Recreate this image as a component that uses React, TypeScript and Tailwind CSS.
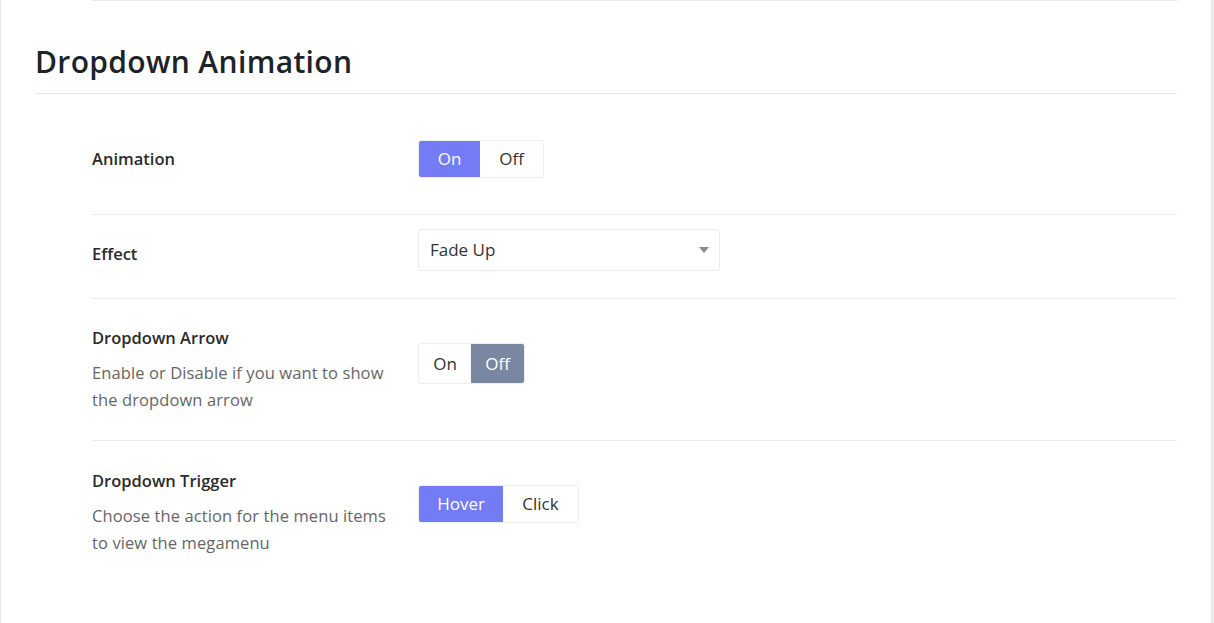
const font = { fontFamily: '"Open Sans", "Noto Sans", Arial, sans-serif' };

function Toggle({
  options,
  active,
  activeClass,
  height,
  widths,
}: {
  options: string[];
  active: number;
  activeClass: string;
  height: string;
  widths: string[];
}) {
  return (
    <div className={`flex ${height} rounded-[3px] border border-[#eeeeee] overflow-hidden`}>
      {options.map((o, i) => (
        <div
          key={o}
          className={`flex items-center justify-center text-[17px] ${widths[i]} ${
            i === active ? activeClass + " text-white" : "bg-white text-[#333]"
          }`}
        >
          {o}
        </div>
      ))}
    </div>
  );
}

function Label({ title, desc }: { title: string; desc?: string[] }) {
  return (
    <div className="w-[326px] shrink-0">
      <div className="text-[16.5px] font-semibold text-[#2b2b2b] leading-[24px]">{title}</div>
      {desc && (
        <div className="mt-[9px] text-[16.5px] text-[#666] leading-[27px] tracking-[0.1px]">
          {desc.map((d) => (
            <div key={d}>{d}</div>
          ))}
        </div>
      )}
    </div>
  );
}

export default function App() {
  return (
    <div className="w-[1214px] h-[623px] bg-white flex" style={font}>
      <div className="w-px bg-[#e6e6e6]" />
      <div className="flex-1 pl-[34px] pr-[34px]">
        <div className="ml-[57px] h-px bg-[#e8e8e8]" />
        <h2 className="mt-[41px] text-[30px] font-semibold text-[#1d2327] leading-[40px] tracking-[0.35px]">
          Dropdown Animation
        </h2>
        <div className="mt-[11px] h-px bg-[#e5e5e5]" />
        <div className="pl-[57px]">
          <div className="flex items-center pt-[46px] pb-[36px] border-b border-[#ebebeb]">
            <Label title="Animation" />
            <Toggle
              options={["On", "Off"]}
              active={0}
              activeClass="bg-[#737bf5]"
              height="h-[38px]"
              widths={["w-[61px]", "w-[63px]"]}
            />
          </div>
          <div className="flex items-start pt-[14px] pb-[27px] border-b border-[#ebebeb]">
            <div className="mt-[13px]">
              <Label title="Effect" />
            </div>
            <div className="w-[302px] h-[42px] rounded-[3px] border border-[#eaeaea] flex items-center justify-between pl-[11px] pr-[10px]">
              <span className="text-[17px] text-[#333]">Fade Up</span>
              <svg width="10" height="6" viewBox="0 0 10 6">
                <path d="M0 0h10L5 6z" fill="#888" />
              </svg>
            </div>
          </div>
          <div className="flex items-start pt-[27px] pb-[27px] border-b border-[#ebebeb]">
            <Label title="Dropdown Arrow" desc={["Enable or Disable if you want to show", "the dropdown arrow"]} />
            <div className="mt-[17px]">
              <Toggle
                options={["On", "Off"]}
                active={1}
                activeClass="bg-[#7a87a1]"
                height="h-[41px]"
                widths={["w-[52px]", "w-[53px]"]}
              />
            </div>
          </div>
          <div className="flex items-start pt-[28px]">
            <Label title="Dropdown Trigger" desc={["Choose the action for the menu items", "to view the megamenu"]} />
            <div className="mt-[16px]">
              <Toggle
                options={["Hover", "Click"]}
                active={0}
                activeClass="bg-[#737bf5]"
                height="h-[38px]"
                widths={["w-[84px]", "w-[75px]"]}
              />
            </div>
          </div>
        </div>
      </div>
      <div className="w-[3px] bg-[#ececec]" />
    </div>
  );
}
